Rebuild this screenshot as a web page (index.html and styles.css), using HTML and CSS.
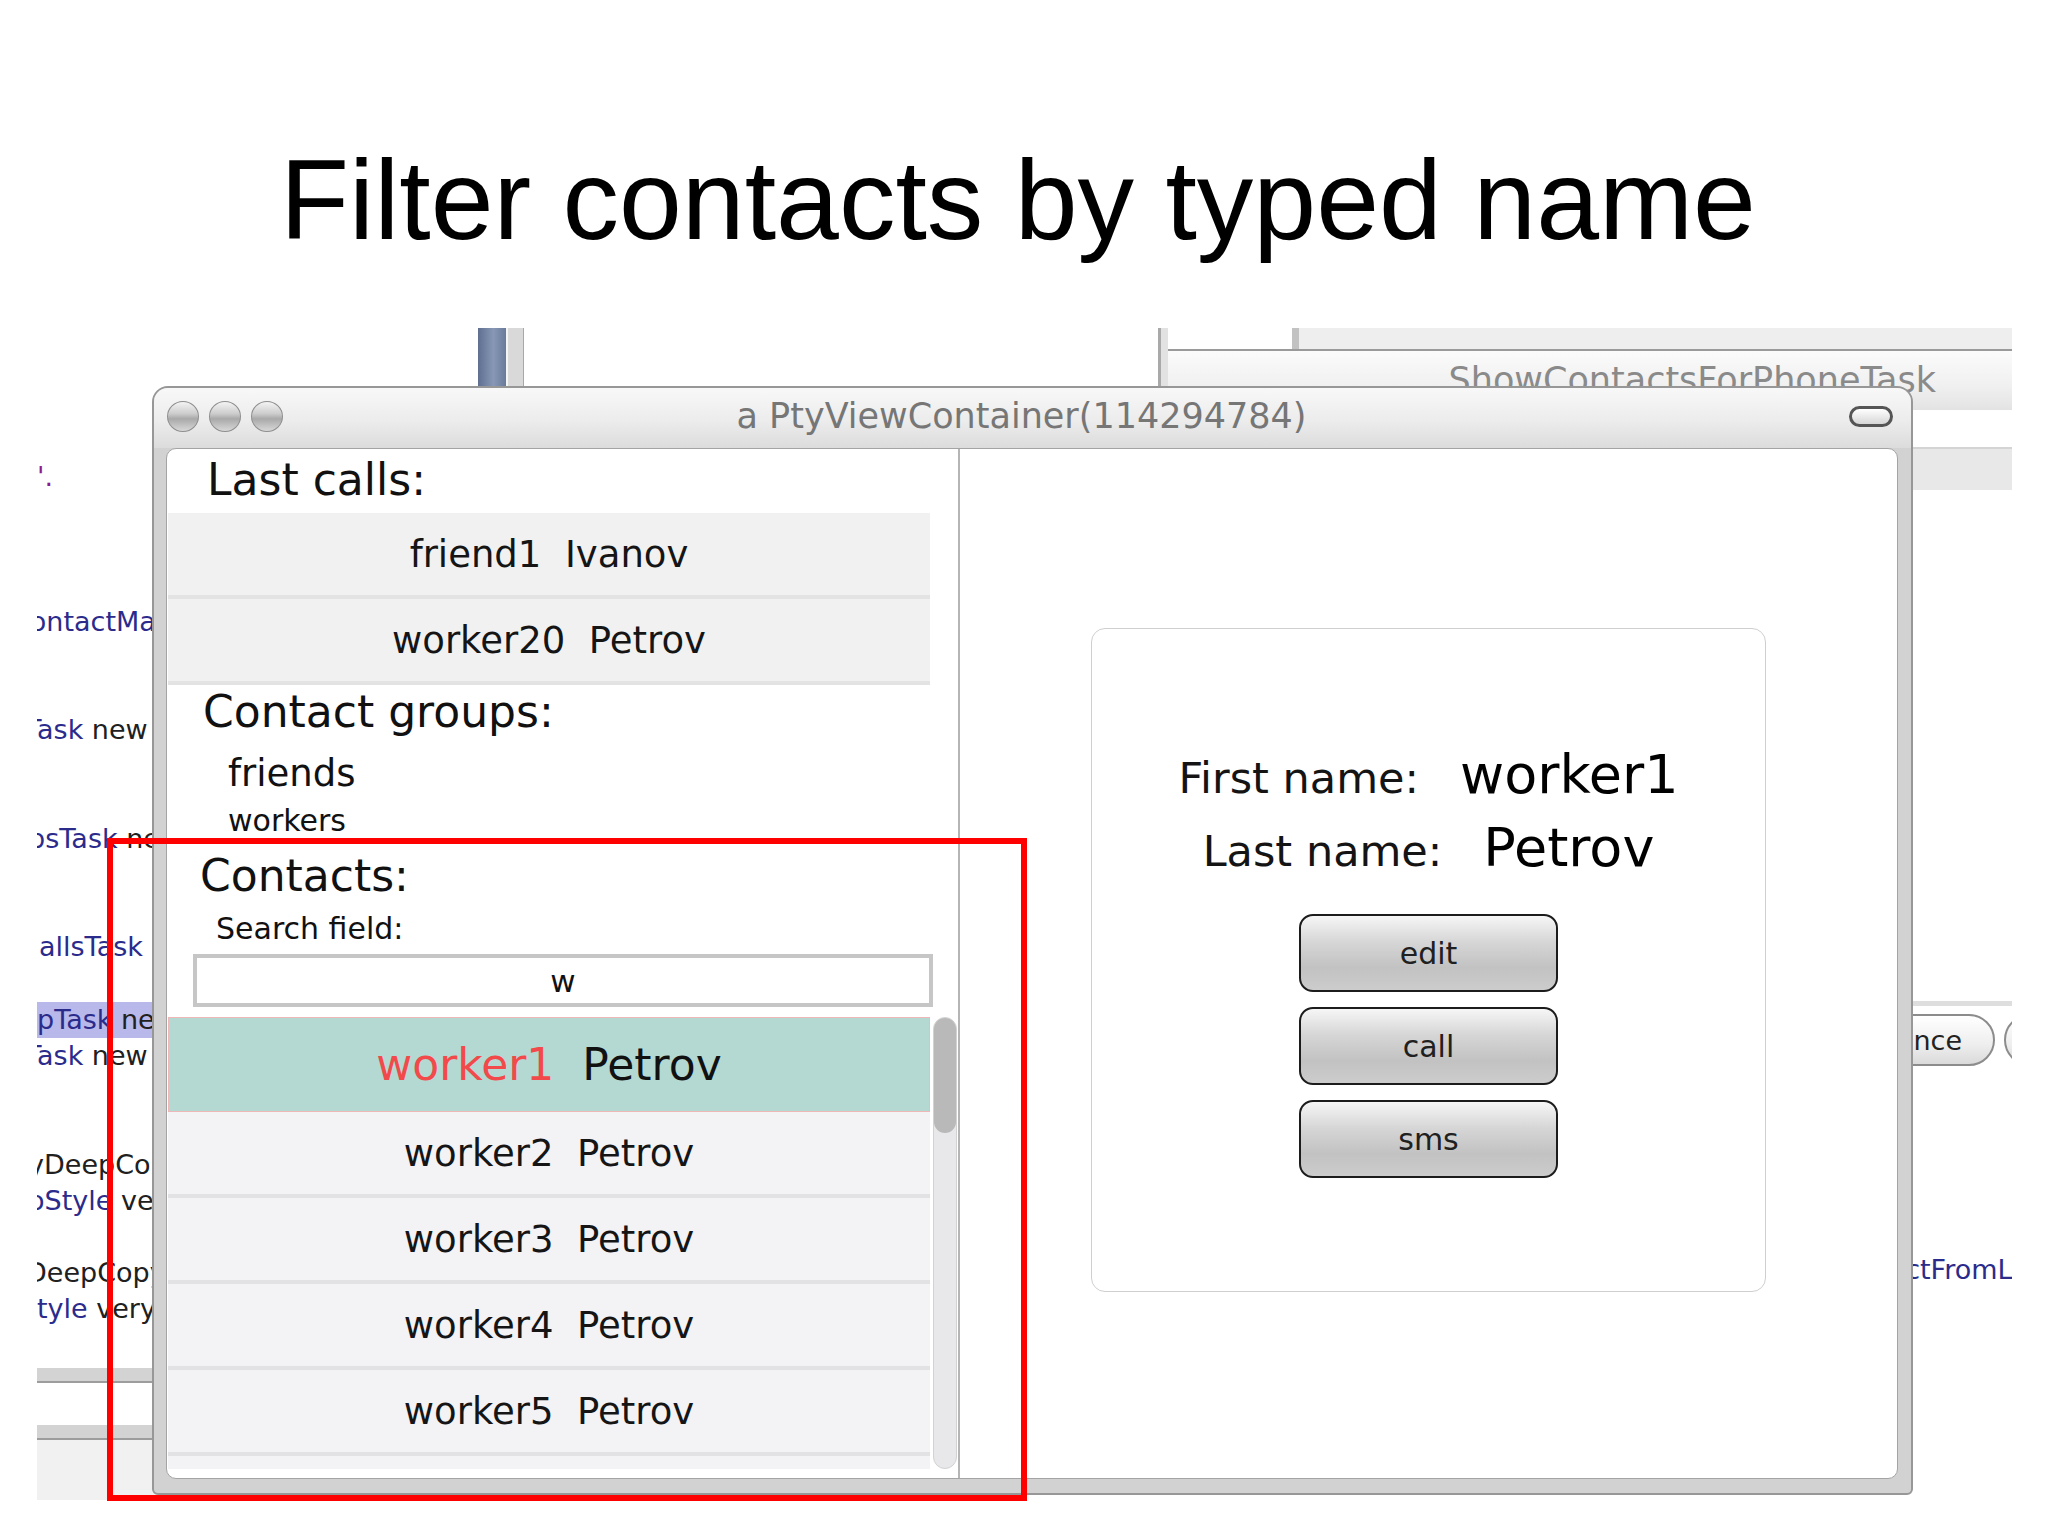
FILE: index.html
```html
<!DOCTYPE html>
<html lang="en">
<head>
    <meta charset="UTF-8">
    <meta name="viewport" content="width=device-width, initial-scale=1.0">
    <title>Filter contacts by typed name</title>
    <link rel="stylesheet" href="styles.css">
</head>
<body>
    <h1 class="slide-title">Filter contacts by typed name</h1>

    <div class="desk">
        <!-- Ventanas del fondo (entorno de desarrollo) -->
        <div class="backdrop">
            <div class="code-pane">
                <div class="code-lines">
                    <div class="ln"><span class="pu">'.</span></div>
                    <div class="ln"></div>
                    <div class="ln"></div>
                    <div class="ln"></div>
                    <div class="ln ind-c"><span class="nv">ContactManager</span> new</div>
                    <div class="ln"></div>
                    <div class="ln"></div>
                    <div class="ln ind-t"><span class="nv">Task</span> new</div>
                    <div class="ln"></div>
                    <div class="ln"></div>
                    <div class="ln ind-c"><span class="nv">upsTask</span> new</div>
                    <div class="ln"></div>
                    <div class="ln"></div>
                    <div class="ln ind-a"><span class="nv">allsTask</span> new</div>
                    <div class="ln"></div>
                    <div class="ln selected-ln"><span class="nv">pTask</span> new</div>
                    <div class="ln ind-t"><span class="nv">Task</span> new</div>
                    <div class="ln"></div>
                    <div class="ln"></div>
                    <div class="ln ind-y">yDeepCopy</div>
                    <div class="ln ind-o"><span class="nv">oStyle</span> very</div>
                    <div class="ln"></div>
                    <div class="ln ind-d">DeepCopy</div>
                    <div class="ln"><span class="nv">tyle</span> very</div>
                </div>
                <div class="pane-bar"></div>
                <div class="pane-bar second"></div>
                <div class="pane-foot"></div>
            </div>

            <div class="scroll-stub"><span class="stub-thumb"></span><span class="stub-track"></span></div>
            <div class="split-line"></div>

            <div class="task-tabs">
                <div class="tabs-top"><span class="tabs-blank"></span><span class="tabs-fill"></span></div>
                <div class="task-tab">ShowContactsForPhoneTask</div>
            </div>

            <div class="side-band"></div>
            <div class="side-rule"></div>
            <div class="side-buttons">
                <span class="side-btn">Reference</span>
                <span class="side-btn next"></span>
            </div>
            <div class="side-code"><span class="nv">tactFromList</span></div>
        </div>

        <!-- Ventana principal -->
        <div class="window">
            <div class="titlebar">
                <div class="lights"><span></span><span></span><span></span></div>
                <div class="win-title">a PtyViewContainer(114294784)</div>
                <div class="collapse-box"><span class="collapse"></span></div>
            </div>

            <div class="win-body">
                <div class="contacts-col">
                    <div class="section-head last-head">Last calls:</div>
                    <div class="calls">
                        <div class="row">friend1  Ivanov</div>
                        <div class="row">worker20  Petrov</div>
                    </div>

                    <div class="section-head groups-head">Contact groups:</div>
                    <div class="group">friends</div>
                    <div class="group small">workers</div>

                    <div class="section-head contacts-head">Contacts:</div>
                    <div class="search-label">Search field:</div>
                    <div class="search-box">w</div>

                    <div class="list-wrap">
                        <div class="list">
                            <div class="row current"><span class="match">worker1</span>  Petrov</div>
                            <div class="row">worker2  Petrov</div>
                            <div class="row">worker3  Petrov</div>
                            <div class="row">worker4  Petrov</div>
                            <div class="row">worker5  Petrov</div>
                            <div class="row">worker6  Petrov</div>
                        </div>
                        <div class="scrollbar"><span class="thumb"></span></div>
                    </div>
                </div>

                <div class="details-col">
                    <div class="card">
                        <div class="field-row">
                            <span class="field-label">First name:</span>
                            <span class="field-value">worker1</span>
                        </div>
                        <div class="field-row">
                            <span class="field-label">Last name:</span>
                            <span class="field-value">Petrov</span>
                        </div>
                        <div class="actions">
                            <button class="act-btn">edit</button>
                            <button class="act-btn">call</button>
                            <button class="act-btn">sms</button>
                        </div>
                    </div>
                </div>
            </div>
        </div>

        <!-- Marco rojo de resaltado -->
        <div class="highlight"></div>
    </div>
</body>
</html>
```

FILE: styles.css
```css
body {
    margin: 0;
    background: #ffffff;
    color: #111111;
    font-family: "DejaVu Sans", Verdana, sans-serif;
    overflow: hidden;
}

.slide-title {
    margin: 144px 0 0;
    padding-right: 12px;
    font-family: "Liberation Sans", Arial, sans-serif;
    font-size: 113px;
    line-height: 113px;
    font-weight: normal;
    text-align: center;
    color: #000000;
}

.desk {
    position: relative;
    width: 2048px;
    height: 1207px;
    margin-top: 71px;
}

/* Fondo */
.backdrop {
    position: absolute;
    left: 37px;
    top: 0;
    width: 1975px;
    height: 1172px;
    overflow: hidden;
}

.code-pane {
    position: absolute;
    left: 0;
    top: 0;
    width: 130px;
    height: 1172px;
    display: flex;
    flex-direction: column;
    font-size: 27px;
}

.code-lines {
    padding-top: 131px;
}

.ln {
    height: 36.2px;
    line-height: 36.2px;
    white-space: pre;
    color: #202020;
}

.ln.ind-c { text-indent: -26px; }
.ln.ind-t { text-indent: -12px; }
.ln.ind-a { text-indent: 2px; }
.ln.ind-y { text-indent: -9px; }
.ln.ind-o { text-indent: -9px; }
.ln.ind-d { text-indent: -11px; }

.ln.selected-ln {
    background: #b8b8ea;
}

.nv { color: #2b2b8c; }
.pu { color: #8c1c8c; }

.pane-bar {
    margin-top: 40px;
    height: 13px;
    background: #d3d3d3;
    border-bottom: 2px solid #9d9d9d;
}

.pane-bar.second {
    margin-top: 42px;
}

.pane-foot {
    height: 60px;
    background: #f1f1f1;
}

.scroll-stub {
    position: absolute;
    left: 441px;
    top: 0;
    width: 46px;
    height: 58px;
    display: flex;
}

.stub-thumb {
    width: 28px;
    background: linear-gradient(to right, #5f6f90, #8797b5 55%, #6a7a9a);
}

.stub-track {
    flex: 1;
    background: #d9d9d9;
    border-left: 2px solid #f4f4f4;
    border-right: 1px solid #a8a8a8;
}

.split-line {
    position: absolute;
    left: 1121px;
    top: 0;
    width: 10px;
    height: 58px;
    box-sizing: border-box;
    background: #e2e2e2;
    border-left: 3px solid #a9a9a9;
}

.task-tabs {
    position: absolute;
    left: 1131px;
    top: 0;
    width: 844px;
    height: 82px;
    display: flex;
    flex-direction: column;
}

.tabs-top {
    height: 21px;
    display: flex;
    border-bottom: 2px solid #9a9a9a;
}

.tabs-blank {
    width: 124px;
    background: #ffffff;
    border-right: 7px solid #c2c2c2;
}

.tabs-fill {
    flex: 1;
    background: #eeeeee;
}

.task-tab {
    height: 59px;
    line-height: 59px;
    padding-right: 76px;
    text-align: right;
    font-size: 35px;
    color: #8a8a8a;
    background: linear-gradient(#fbfbfb, #f0f0f0 60%, #e3e3e3);
}

.side-band {
    position: absolute;
    left: 1763px;
    top: 119px;
    width: 212px;
    height: 41px;
    background: #e8e8e8;
    border-top: 2px solid #d4d4d4;
}

.side-rule {
    position: absolute;
    left: 1763px;
    top: 673px;
    width: 212px;
    height: 5px;
    background: #dedede;
}

.side-buttons {
    position: absolute;
    left: 1803px;
    top: 686px;
    display: flex;
    gap: 9px;
}

.side-btn {
    box-sizing: border-box;
    width: 155px;
    height: 52px;
    padding-right: 31px;
    display: flex;
    align-items: center;
    justify-content: flex-end;
    border: 2px solid #8c8c8c;
    border-radius: 26px;
    background: linear-gradient(#ffffff, #eeeeee 60%, #dadada);
    font-size: 27px;
    white-space: nowrap;
    color: #222222;
    overflow: hidden;
}

.side-btn.next {
    width: 100px;
}

.side-code {
    position: absolute;
    left: 1841px;
    top: 924px;
    font-size: 27px;
    line-height: 36px;
    white-space: nowrap;
}

/* Ventana principal */
.window {
    position: absolute;
    left: 152px;
    top: 58px;
    width: 1761px;
    height: 1109px;
    box-sizing: border-box;
    display: flex;
    flex-direction: column;
    border: 2px solid #979797;
    border-radius: 16px 16px 6px 6px;
    background: #d2d2d2;
}

.titlebar {
    height: 60px;
    box-sizing: border-box;
    padding-bottom: 4px;
    flex-shrink: 0;
    display: grid;
    grid-template-columns: 1fr auto 1fr;
    align-items: center;
    border-radius: 14px 14px 0 0;
    background: linear-gradient(#f8f8f8, #ececec 55%, #dcdcdc);
}

.lights {
    display: flex;
    gap: 10px;
    padding-left: 13px;
}

.lights span {
    width: 32px;
    height: 31px;
    box-sizing: border-box;
    border: 1px solid #8e8e8e;
    border-radius: 50%;
    background: linear-gradient(#f4f4f4 0%, #cdcdcd 40%, #a9a9a9 58%, #d8d8d8 100%);
}

.win-title {
    margin-right: 22px;
    font-size: 35px;
    color: #767676;
    white-space: nowrap;
}

.collapse-box {
    display: flex;
    justify-content: flex-end;
    padding-right: 18px;
}

.collapse {
    width: 44px;
    height: 21px;
    box-sizing: border-box;
    border: 3px solid #555555;
    border-radius: 11px;
    background: linear-gradient(#ffffff, #d6d6d6);
}

.win-body {
    height: 1031px;
    margin: 0 13px 14px 12px;
    box-sizing: border-box;
    display: flex;
    border: 1px solid #a4a4a4;
    border-radius: 10px;
    background: #ffffff;
    overflow: hidden;
}

/* Columna izquierda */
.contacts-col {
    width: 791px;
    flex-shrink: 0;
    display: flex;
    flex-direction: column;
    border-right: 2px solid #b5b5b5;
}

.section-head {
    font-size: 44px;
    line-height: 51px;
    color: #111111;
}

.last-head {
    margin-top: 5px;
    padding-left: 40px;
}

.groups-head {
    margin-top: 1px;
    padding-left: 36px;
}

.contacts-head {
    margin-top: 12px;
    padding-left: 33px;
}

.calls {
    margin: 8px 0 0 1px;
    width: 762px;
}

.row {
    height: 82px;
    display: flex;
    align-items: center;
    justify-content: center;
    background: #f1f1f1;
    border-bottom: 4px solid #e3e3e3;
    font-size: 37px;
    white-space: pre;
    color: #151515;
}

.group {
    margin-top: 15px;
    padding-left: 61px;
    font-size: 37px;
    line-height: 43px;
}

.group.small {
    margin-top: 8px;
    font-size: 30px;
    line-height: 35px;
}

.search-label {
    margin-top: 11px;
    padding-left: 49px;
    font-size: 30px;
    line-height: 34px;
}

.search-box {
    margin: 8px 0 0 26px;
    width: 740px;
    height: 53px;
    box-sizing: border-box;
    display: flex;
    align-items: center;
    justify-content: center;
    border: 4px solid #c6c6c6;
    font-size: 31px;
}

.list-wrap {
    margin: 10px 0 0 1px;
    height: 452px;
    display: flex;
    gap: 3px;
}

.list {
    width: 762px;
    overflow: hidden;
}

.list .row {
    background: #f3f2f5;
    border-bottom-color: #e2e1e4;
}

.list .row.current {
    height: 95px;
    box-sizing: border-box;
    background: #b4d9d3;
    border: 1px solid #efb8b8;
    font-size: 44px;
    color: #111111;
}

.match {
    color: #f24a4a;
}

.scrollbar {
    width: 24px;
    box-sizing: border-box;
    border: 1px solid #d2d2d2;
    border-radius: 12px;
    background: #e8e7ea;
}

.thumb {
    display: block;
    height: 115px;
    border-radius: 11px;
    background: #b9b9b9;
}

/* Columna derecha */
.details-col {
    flex: 1;
}

.card {
    width: 675px;
    height: 664px;
    margin: 179px 0 0 131px;
    padding-top: 114px;
    box-sizing: border-box;
    display: flex;
    flex-direction: column;
    align-items: center;
    border: 1px solid #cfcfcf;
    border-radius: 14px;
}

.field-row {
    height: 63px;
    display: flex;
    align-items: baseline;
    gap: 41px;
}

.field-row + .field-row {
    margin-top: 10px;
}

.field-label {
    font-size: 43px;
    color: #141414;
}

.field-value {
    font-size: 54px;
    line-height: 63px;
    color: #000000;
}

.actions {
    margin-top: 35px;
    display: flex;
    flex-direction: column;
    gap: 15px;
}

.act-btn {
    width: 259px;
    height: 78px;
    box-sizing: border-box;
    padding: 0;
    border: 2px solid #1c1c1c;
    border-radius: 14px;
    background: linear-gradient(#f6f6f6 0%, #d6d6d6 35%, #c2c2c2 70%, #cccccc 100%);
    font-family: "DejaVu Sans", Verdana, sans-serif;
    font-size: 30px;
    color: #202020;
}

/* Resaltado */
.highlight {
    position: absolute;
    left: 107px;
    top: 510px;
    width: 920px;
    height: 663px;
    box-sizing: border-box;
    border: 6px solid #ff0000;
}
```
